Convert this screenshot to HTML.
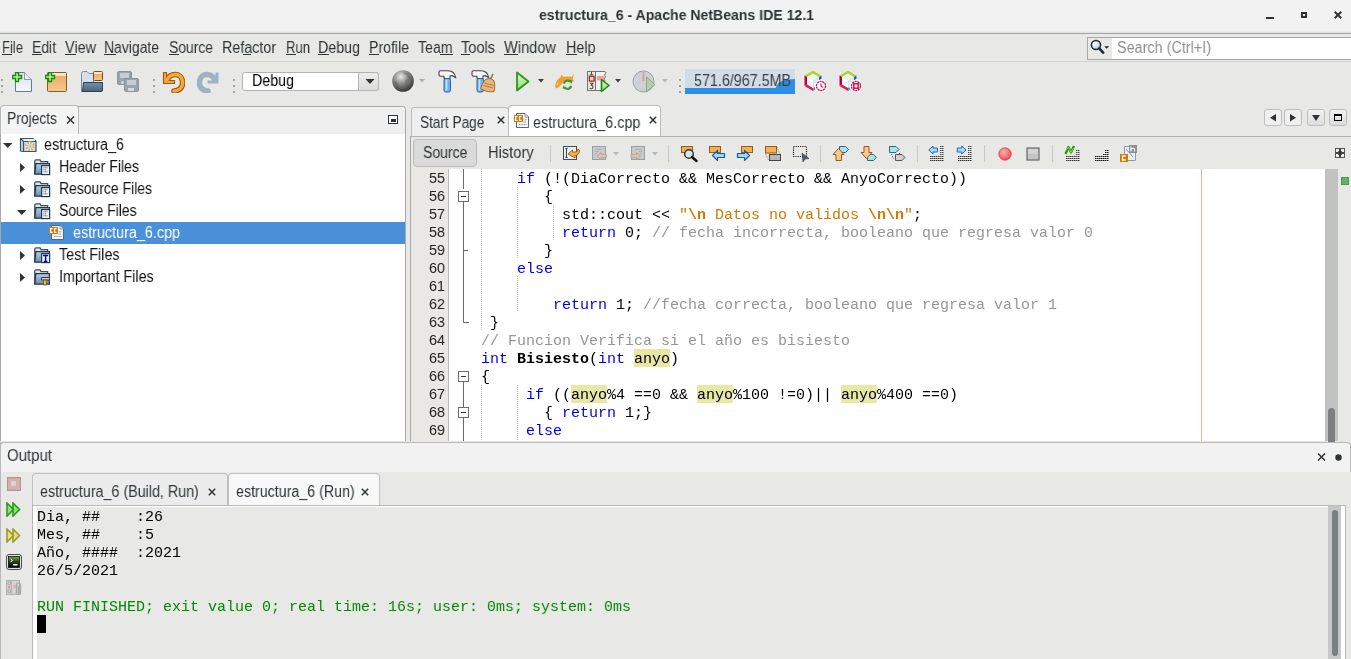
<!DOCTYPE html>
<html><head><meta charset="utf-8">
<style>
*{margin:0;padding:0;box-sizing:border-box}
html,body{width:1351px;height:659px;overflow:hidden;background:#e8e8e7;font-family:"Liberation Sans",sans-serif;color:#2e3436;position:relative}
.a{position:absolute}
.t{position:absolute;white-space:pre;will-change:transform}
</style></head><body>
<div class="a" style="left:0px;top:0px;width:1351px;height:33px;background:#f2f2f2;"></div>
<div class="a" style="left:0px;top:31px;width:1351px;height:2px;background:linear-gradient(#f2f2f2,#dcdcdc);"></div>
<div class="a" style="left:0px;top:33px;width:1351px;height:1px;background:#a6a6a6;"></div>
<div class="t" style="left:538.5px;top:5.80px;font-size:15px;line-height:18px;color:#2e3436;font-weight:bold;font-family:'Liberation Sans',sans-serif;transform:scaleX(0.9389);transform-origin:0 0;">estructura_6 - Apache NetBeans IDE 12.1</div>
<div class="a" style="left:1266px;top:17px;width:8px;height:2px;background:#2e3436;"></div>
<div class="a" style="left:1301px;top:12px;width:6px;height:6px;border:2px solid #2e3436"></div>
<svg class="a" style="left:1334px;top:11px;" width="8" height="8" viewBox="0 0 8 8"><path d="M0.7 0.7 L7.3 7.3 M7.3 0.7 L0.7 7.3" stroke="#2e3436" stroke-width="2"/></svg>
<div class="a" style="left:0px;top:61px;width:1351px;height:1px;background:#d3d3d2;"></div>
<div class="t" style="left:2px;top:37.95px;font-size:16px;line-height:19px;color:#2e3436;font-weight:normal;font-family:'Liberation Sans',sans-serif;transform:scaleX(0.8145);transform-origin:0 0;">File</div>
<div class="t" style="left:32px;top:37.95px;font-size:16px;line-height:19px;color:#2e3436;font-weight:normal;font-family:'Liberation Sans',sans-serif;transform:scaleX(0.8703);transform-origin:0 0;">Edit</div>
<div class="t" style="left:65px;top:37.95px;font-size:16px;line-height:19px;color:#2e3436;font-weight:normal;font-family:'Liberation Sans',sans-serif;transform:scaleX(0.9014);transform-origin:0 0;">View</div>
<div class="t" style="left:104px;top:37.95px;font-size:16px;line-height:19px;color:#2e3436;font-weight:normal;font-family:'Liberation Sans',sans-serif;transform:scaleX(0.8709);transform-origin:0 0;">Navigate</div>
<div class="t" style="left:169px;top:37.95px;font-size:16px;line-height:19px;color:#2e3436;font-weight:normal;font-family:'Liberation Sans',sans-serif;transform:scaleX(0.8678);transform-origin:0 0;">Source</div>
<div class="t" style="left:222px;top:37.95px;font-size:16px;line-height:19px;color:#2e3436;font-weight:normal;font-family:'Liberation Sans',sans-serif;transform:scaleX(0.8930);transform-origin:0 0;">Refactor</div>
<div class="t" style="left:286px;top:37.95px;font-size:16px;line-height:19px;color:#2e3436;font-weight:normal;font-family:'Liberation Sans',sans-serif;transform:scaleX(0.8175);transform-origin:0 0;">Run</div>
<div class="t" style="left:318px;top:37.95px;font-size:16px;line-height:19px;color:#2e3436;font-weight:normal;font-family:'Liberation Sans',sans-serif;transform:scaleX(0.8907);transform-origin:0 0;">Debug</div>
<div class="t" style="left:369px;top:37.95px;font-size:16px;line-height:19px;color:#2e3436;font-weight:normal;font-family:'Liberation Sans',sans-serif;transform:scaleX(0.8818);transform-origin:0 0;">Profile</div>
<div class="t" style="left:418px;top:37.95px;font-size:16px;line-height:19px;color:#2e3436;font-weight:normal;font-family:'Liberation Sans',sans-serif;transform:scaleX(0.8843);transform-origin:0 0;">Team</div>
<div class="t" style="left:461px;top:37.95px;font-size:16px;line-height:19px;color:#2e3436;font-weight:normal;font-family:'Liberation Sans',sans-serif;transform:scaleX(0.9101);transform-origin:0 0;">Tools</div>
<div class="t" style="left:504px;top:37.95px;font-size:16px;line-height:19px;color:#2e3436;font-weight:normal;font-family:'Liberation Sans',sans-serif;transform:scaleX(0.9138);transform-origin:0 0;">Window</div>
<div class="t" style="left:565.5px;top:37.95px;font-size:16px;line-height:19px;color:#2e3436;font-weight:normal;font-family:'Liberation Sans',sans-serif;transform:scaleX(0.8965);transform-origin:0 0;">Help</div>
<div class="a" style="left:2px;top:54px;width:10px;height:1px;background:#2e3436;"></div>
<div class="a" style="left:32px;top:54px;width:10px;height:1px;background:#2e3436;"></div>
<div class="a" style="left:65px;top:54px;width:11px;height:1px;background:#2e3436;"></div>
<div class="a" style="left:104px;top:54px;width:12px;height:1px;background:#2e3436;"></div>
<div class="a" style="left:169px;top:54px;width:10px;height:1px;background:#2e3436;"></div>
<div class="a" style="left:243px;top:54px;width:8px;height:1px;background:#2e3436;"></div>
<div class="a" style="left:286px;top:54px;width:10px;height:1px;background:#2e3436;"></div>
<div class="a" style="left:318px;top:54px;width:11px;height:1px;background:#2e3436;"></div>
<div class="a" style="left:369px;top:54px;width:10px;height:1px;background:#2e3436;"></div>
<div class="a" style="left:440px;top:54px;width:13px;height:1px;background:#2e3436;"></div>
<div class="a" style="left:461px;top:54px;width:9px;height:1px;background:#2e3436;"></div>
<div class="a" style="left:504px;top:54px;width:14px;height:1px;background:#2e3436;"></div>
<div class="a" style="left:565.5px;top:54px;width:11px;height:1px;background:#2e3436;"></div>
<div class="a" style="left:1087px;top:37px;width:264px;height:23px;background:#ffffff;border:1px solid #a9a9a9;border-right:none"></div>
<div class="a" style="left:1088px;top:38px;width:24px;height:21px;background:#e8e8e7;"></div>
<svg class="a" style="left:1089px;top:38px;" width="23" height="21" viewBox="0 0 23 21"><defs><radialGradient id="lens" cx="0.35" cy="0.35" r="0.7"><stop offset="0" stop-color="#ffffff"/><stop offset="1" stop-color="#a8c8e8"/></radialGradient></defs><circle cx="7" cy="7" r="4.6" fill="url(#lens)" stroke="#1e2830" stroke-width="1.5"/><path d="M10.2 10.4 L14.2 14.6" stroke="#1e2830" stroke-width="2.6" stroke-linecap="round"/><path d="M15.2 8.2 H20.2 L17.7 10.8 Z" fill="#1e2830"/></svg>
<div class="t" style="left:1116.7px;top:38.45px;font-size:16px;line-height:19px;color:#8b8e8f;font-weight:normal;font-family:'Liberation Sans',sans-serif;transform:scaleX(0.8998);transform-origin:0 0;">Search (Ctrl+I)</div>
<div class="a" style="left:1px;top:79px;width:2px;height:2px;background:#a0a0a0;"></div>
<div class="a" style="left:1px;top:85px;width:2px;height:2px;background:#a0a0a0;"></div>
<div class="a" style="left:1px;top:91px;width:2px;height:2px;background:#a0a0a0;"></div>
<div class="a" style="left:153px;top:79px;width:2px;height:2px;background:#a0a0a0;"></div>
<div class="a" style="left:153px;top:85px;width:2px;height:2px;background:#a0a0a0;"></div>
<div class="a" style="left:153px;top:91px;width:2px;height:2px;background:#a0a0a0;"></div>
<div class="a" style="left:233px;top:79px;width:2px;height:2px;background:#a0a0a0;"></div>
<div class="a" style="left:233px;top:85px;width:2px;height:2px;background:#a0a0a0;"></div>
<div class="a" style="left:233px;top:91px;width:2px;height:2px;background:#a0a0a0;"></div>
<div class="a" style="left:679px;top:79px;width:2px;height:2px;background:#a0a0a0;"></div>
<div class="a" style="left:679px;top:85px;width:2px;height:2px;background:#a0a0a0;"></div>
<div class="a" style="left:679px;top:91px;width:2px;height:2px;background:#a0a0a0;"></div>
<svg class="a" style="left:12px;top:72px;" width="21" height="21" viewBox="0 0 21 21"><defs><linearGradient id="gdoc" x1="0" y1="0" x2="0" y2="1"><stop offset="0" stop-color="#d8e2ee"/><stop offset="1" stop-color="#f4f7fb"/></linearGradient><linearGradient id="gorg" x1="0" y1="0" x2="0" y2="1"><stop offset="0" stop-color="#e9a85a"/><stop offset="1" stop-color="#f4c990"/></linearGradient><linearGradient id="gblu" x1="0" y1="0" x2="0" y2="1"><stop offset="0" stop-color="#7890a8"/><stop offset="1" stop-color="#4a6480"/></linearGradient><linearGradient id="ggrn" x1="0" y1="0" x2="0" y2="1"><stop offset="0" stop-color="#e0f8c8"/><stop offset="1" stop-color="#90d870"/></linearGradient></defs><path d="M3.5 0.5 H12.5 L19.5 7.5 V19.5 H3.5 Z" fill="url(#gdoc)" stroke="#6c7a88"/><path d="M12.5 0.5 V7.5 H19.5" fill="#e8eef4" stroke="#8a98a6"/><path d="M3.5 0.5 H6.5 V3.5 H9.5 V6.5 H6.5 V9.5 H3.5 V6.5 H0.5 V3.5 H3.5 Z" fill="#b8f088" stroke="#178a17" stroke-width="1.4"/></svg>
<svg class="a" style="left:45px;top:72px;" width="23" height="21" viewBox="0 0 23 21"><defs><linearGradient id="gdoc" x1="0" y1="0" x2="0" y2="1"><stop offset="0" stop-color="#d8e2ee"/><stop offset="1" stop-color="#f4f7fb"/></linearGradient><linearGradient id="gorg" x1="0" y1="0" x2="0" y2="1"><stop offset="0" stop-color="#e9a85a"/><stop offset="1" stop-color="#f4c990"/></linearGradient><linearGradient id="gblu" x1="0" y1="0" x2="0" y2="1"><stop offset="0" stop-color="#7890a8"/><stop offset="1" stop-color="#4a6480"/></linearGradient><linearGradient id="ggrn" x1="0" y1="0" x2="0" y2="1"><stop offset="0" stop-color="#e0f8c8"/><stop offset="1" stop-color="#90d870"/></linearGradient></defs><rect x="2.5" y="0.5" width="19" height="19" rx="1" fill="url(#gorg)" stroke="#8a5a20"/><rect x="3" y="1" width="18" height="3" fill="#fbe6c8"/><path d="M3.5 0.5 H6.5 V3.5 H9.5 V6.5 H6.5 V9.5 H3.5 V6.5 H0.5 V3.5 H3.5 Z" fill="#b8f088" stroke="#178a17" stroke-width="1.4"/></svg>
<svg class="a" style="left:80px;top:70px;" width="24" height="23" viewBox="0 0 24 23"><defs><linearGradient id="gdoc" x1="0" y1="0" x2="0" y2="1"><stop offset="0" stop-color="#d8e2ee"/><stop offset="1" stop-color="#f4f7fb"/></linearGradient><linearGradient id="gorg" x1="0" y1="0" x2="0" y2="1"><stop offset="0" stop-color="#e9a85a"/><stop offset="1" stop-color="#f4c990"/></linearGradient><linearGradient id="gblu" x1="0" y1="0" x2="0" y2="1"><stop offset="0" stop-color="#7890a8"/><stop offset="1" stop-color="#4a6480"/></linearGradient><linearGradient id="ggrn" x1="0" y1="0" x2="0" y2="1"><stop offset="0" stop-color="#e0f8c8"/><stop offset="1" stop-color="#90d870"/></linearGradient></defs><path d="M1.5 3.5 Q1.5 1.5 3.5 1.5 H7 L9 3.5 H13.5 V21.5 H1.5 Z" fill="#d6e0ea" stroke="#7a8a9a"/><rect x="13.5" y="1.5" width="9" height="9" rx="1" fill="url(#gorg)" stroke="#7a4a10"/><rect x="14" y="2" width="8" height="2" fill="#fbe6c8"/><path d="M3.5 12.5 H22.5 V20 Q22.5 21.5 21 21.5 H2.5 Z" fill="url(#gblu)" stroke="#2a3e54"/></svg>
<svg class="a" style="left:117px;top:71px;" width="23" height="22" viewBox="0 0 23 22"><rect x="0.5" y="0.5" width="14" height="13" rx="1.5" fill="#9aa4ac" stroke="#8a949c"/><rect x="3" y="2" width="9" height="5" fill="#c8ccd0"/><rect x="4" y="10" width="6" height="3" fill="#c8ccd0"/><rect x="7.5" y="7.5" width="14" height="13" rx="1.5" fill="#9aa4ac" stroke="#8a949c"/><rect x="10" y="9" width="9" height="5" fill="#c8ccd0"/><rect x="11" y="17" width="6" height="3" fill="#d8dadc"/></svg>
<svg class="a" style="left:162px;top:71px;" width="23" height="22" viewBox="0 0 23 22"><path d="M5 9 C8 2 19 1 20.5 10 C21.5 17 16 20 12 20" fill="none" stroke="#9a5a10" stroke-width="5.6" stroke-linecap="round"/><path d="M1.5 1.5 H4.5 V9.5 H12.5 V12.5 H1.5 Z" fill="#f0a838" stroke="#9a5a10" stroke-width="1.2" stroke-linejoin="round"/><path d="M5 9 C8 2 19 1 20.5 10 C21.5 17 16 20 12 20" fill="none" stroke="#f5a838" stroke-width="3.4" stroke-linecap="round"/><path d="M2.2 2.2 H3.8 V10.5 H12 V11.8 H2.2 Z" fill="#f5a838"/></svg>
<svg class="a" style="left:197px;top:71px;" width="23" height="22" viewBox="0 0 23 22"><path d="M18 9 C15 2 4 1 2.5 10 C1.5 17 7 20 11 20" fill="none" stroke="#9eb2c4" stroke-width="5.6" stroke-linecap="round"/><path d="M21.5 1.5 H18.5 V9.5 H10.5 V12.5 H21.5 Z" fill="#9eb2c4"/></svg>
<div class="a" style="left:242px;top:72px;width:137px;height:19px;background:#fff;border:1px solid #b3b3b3;border-radius:3px"></div>
<div class="a" style="left:358px;top:72px;width:21px;height:19px;background:linear-gradient(#ededed,#dcdcdc);border:1px solid #b3b3b3;border-radius:0 3px 3px 0"></div>
<svg class="a" style="left:365px;top:79px;" width="10" height="6" viewBox="0 0 10 6"><path d="M0.5 0 H9.5 L5 5 Z" fill="#2e3436"/></svg>
<div class="t" style="left:252px;top:70.95px;font-size:16px;line-height:19px;color:#000000;font-weight:normal;font-family:'Liberation Sans',sans-serif;transform:scaleX(0.8907);transform-origin:0 0;">Debug</div>
<svg class="a" style="left:392px;top:70px;" width="23" height="22" viewBox="0 0 23 22"><defs><radialGradient id="gl" cx="0.4" cy="0.3" r="0.75"><stop offset="0" stop-color="#e8e8e8"/><stop offset="0.45" stop-color="#8a8a8a"/><stop offset="1" stop-color="#2a2a2a"/></radialGradient></defs><circle cx="11" cy="11" r="10.8" fill="url(#gl)"/><path d="M12 3 C16 4 18 7 17 10 C15 9 13 12 15 15 C13 18 11 17 10 19" fill="none" stroke="#666" stroke-width="1.8" opacity="0.5"/><path d="M3 12 C5 13 6 16 5 18" fill="none" stroke="#555" stroke-width="1.6" opacity="0.5"/></svg>
<svg class="a" style="left:418.5px;top:79px;" width="6" height="4" viewBox="0 0 6 4"><path d="M0 0 H6 L3 3.6 Z" fill="#b0b0b0"/></svg>
<svg class="a" style="left:438px;top:70px;" width="19" height="23" viewBox="0 0 19 23"><path d="M1 2.2 Q1 0.8 2.5 0.8 H10 C14 0.8 17 3.5 17.8 7.8 C15.5 5.8 13.5 5.2 12 6 V8.5 H6 V6.2 H2.5 Q1 6.2 1 4.8 Z" fill="#f2f4f6" stroke="#3e4850" stroke-width="1.1" stroke-linejoin="round"/><rect x="6" y="8.5" width="6.5" height="13.5" rx="1.8" fill="#6eb0ec" stroke="#2a64a4"/><rect x="7.6" y="9.5" width="1.8" height="11" fill="#c0e0fa"/></svg>
<svg class="a" style="left:471px;top:70px;" width="25" height="23" viewBox="0 0 25 23"><path d="M1 2.2 Q1 0.8 2.5 0.8 H10 C14 0.8 17 3.5 17.8 7.8 C15.5 5.8 13.5 5.2 12 6 V8.5 H6 V6.2 H2.5 Q1 6.2 1 4.8 Z" fill="#f2f4f6" stroke="#3e4850" stroke-width="1.1" stroke-linejoin="round"/><rect x="6" y="8.5" width="6.5" height="13.5" rx="1.8" fill="#6eb0ec" stroke="#2a64a4"/><rect x="7.6" y="9.5" width="1.8" height="11" fill="#c0e0fa"/><path d="M22 4 L19.5 9" stroke="#8a6a3a" stroke-width="1.6"/><path d="M14 10 C17 8 21 8 23 11 C24 14 24 18 23 21.5 C19 22.5 13 21 9.5 18.5 C11 15 12 12 14 10 Z" fill="#e6b878" stroke="#9a6a2a" stroke-width="1"/><path d="M13.5 13 L22.5 15.5 M12.5 15.5 L22 18" stroke="#c86a4a" stroke-width="0.9"/></svg>
<svg class="a" style="left:515px;top:71px;" width="15" height="21" viewBox="0 0 15 21"><defs><linearGradient id="gdoc" x1="0" y1="0" x2="0" y2="1"><stop offset="0" stop-color="#d8e2ee"/><stop offset="1" stop-color="#f4f7fb"/></linearGradient><linearGradient id="gorg" x1="0" y1="0" x2="0" y2="1"><stop offset="0" stop-color="#e9a85a"/><stop offset="1" stop-color="#f4c990"/></linearGradient><linearGradient id="gblu" x1="0" y1="0" x2="0" y2="1"><stop offset="0" stop-color="#7890a8"/><stop offset="1" stop-color="#4a6480"/></linearGradient><linearGradient id="ggrn" x1="0" y1="0" x2="0" y2="1"><stop offset="0" stop-color="#e0f8c8"/><stop offset="1" stop-color="#90d870"/></linearGradient></defs><path d="M2 1.5 L13.5 10.5 L2 19.5 Z" fill="url(#ggrn)" stroke="#2a9a1a" stroke-width="1.8" stroke-linejoin="round"/></svg>
<svg class="a" style="left:537.5px;top:79px;" width="6" height="4" viewBox="0 0 6 4"><path d="M0 0 H6 L3 3.6 Z" fill="#404040"/></svg>
<svg class="a" style="left:553px;top:72px;" width="22" height="19" viewBox="0 0 22 19"><path d="M2.5 15.5 C1.5 12 3.5 7.5 7.5 5.5 L8.5 2.5 L10.5 5 C13.5 4.3 16.5 4.5 18.5 5 L21 2 L19.8 6.5 L21 9.5 C18 8.8 15 8.8 12 9.5 C9 11 7.5 14.5 3.5 16.5 Z" fill="#f0a030"/><circle cx="4.5" cy="12" r="0.8" fill="#fff" opacity="0.7"/><path d="M11 11.5 A3.8 3.8 0 0 1 17.8 10.2" fill="none" stroke="#3a9a3a" stroke-width="2.2"/><path d="M18.2 13.8 A3.8 3.8 0 0 1 11.2 15" fill="none" stroke="#3a9a3a" stroke-width="2.2"/><path d="M16 8 L19.5 8.5 L18.5 12 Z M13 17.2 L9.5 16.5 L10.7 13.2 Z" fill="#3a9a3a"/><circle cx="14.5" cy="12.5" r="2" fill="#d8f0d8"/></svg>
<svg class="a" style="left:586px;top:70px;" width="25" height="23" viewBox="0 0 25 23"><defs><linearGradient id="gdoc" x1="0" y1="0" x2="0" y2="1"><stop offset="0" stop-color="#d8e2ee"/><stop offset="1" stop-color="#f4f7fb"/></linearGradient><linearGradient id="gorg" x1="0" y1="0" x2="0" y2="1"><stop offset="0" stop-color="#e9a85a"/><stop offset="1" stop-color="#f4c990"/></linearGradient><linearGradient id="gblu" x1="0" y1="0" x2="0" y2="1"><stop offset="0" stop-color="#7890a8"/><stop offset="1" stop-color="#4a6480"/></linearGradient><linearGradient id="ggrn" x1="0" y1="0" x2="0" y2="1"><stop offset="0" stop-color="#e0f8c8"/><stop offset="1" stop-color="#90d870"/></linearGradient></defs><path d="M1.5 1.5 H19 L20 3 L18.5 5 L19.5 7 L18 9 L19 11 L17.5 13 L18.5 15 L17 17 L18 19 L17 20.5 H1.5 Z" fill="#eef0f2" stroke="#6a7580"/><rect x="1.5" y="1.5" width="8" height="19" fill="#f2e8c8" stroke="#6a7580"/><path d="M5.5 2 V4.5 M3.8 4.8 H7.2" stroke="#333" stroke-width="0.9"/><rect x="3.3" y="6.3" width="4.8" height="4.8" fill="#f8c8c0" stroke="#902a2a" stroke-width="1.2"/><path d="M3.8 13.3 H6.8 L5.2 15.3 C7.6 15.3 7.6 18.8 5.2 18.8 C4.4 18.8 4 18.5 3.7 18" fill="none" stroke="#3a4650" stroke-width="1.1"/><rect x="11" y="6" width="7" height="4.5" fill="#f89a9a"/><path d="M15.5 9.5 L23 15.5 L15.5 21.5 Z" fill="url(#ggrn)" stroke="#1a8a10" stroke-width="1.6" stroke-linejoin="round"/></svg>
<svg class="a" style="left:614.5px;top:79px;" width="6" height="4" viewBox="0 0 6 4"><path d="M0 0 H6 L3 3.6 Z" fill="#404040"/></svg>
<svg class="a" style="left:632px;top:70px;" width="24" height="23" viewBox="0 0 24 23"><circle cx="11.5" cy="11.5" r="10.5" fill="#cdd1d5" stroke="#9aa0a6"/><path d="M11.5 2 V11" stroke="#d8a078" stroke-width="1.6"/><path d="M14.5 7 L23 14.5 L14.5 22 Z" fill="#b8ccb0" stroke="#8aa880" stroke-width="1"/></svg>
<svg class="a" style="left:662px;top:79px;" width="6" height="4" viewBox="0 0 6 4"><path d="M0 0 H6 L3 3.6 Z" fill="#b8b8b8"/></svg>
<div class="a" style="left:685px;top:69px;width:110px;height:25px;background:#d0dce8;"></div>
<svg class="a" style="left:685px;top:69px;" width="110" height="25" viewBox="0 0 110 25"><path d="M0 19 H91 C92 15 94 10.5 110 10 V25 H0 Z" fill="#2e8de4"/></svg>
<div class="t" style="left:693.5px;top:70.95px;font-size:16px;line-height:19px;color:#3a3c3e;font-weight:normal;font-family:'Liberation Sans',sans-serif;transform:scaleX(0.8938);transform-origin:0 0;">571.6/967.5MB</div>
<svg class="a" style="left:803px;top:69px;" width="25" height="25" viewBox="0 0 25 25"><path d="M10 1.5 L18.5 6.5 L18.5 17 L10 22 L1.5 17 L1.5 6.5 Z" fill="#fff"/><path d="M10 4.5 L16 8 L10 11.5 L4 8 Z" fill="#f2f6e4"/><path d="M16 8 V15.5 L10 19 V11.5 Z" fill="#d8e4f0"/><path d="M1.5 6.5 L10 1.5 L18.5 6.5 L16 8 L10 4.5 L4 8 Z" fill="#a8d830"/><path d="M1.5 6.5 L4 8 V15.5 L1.5 17 Z" fill="#b0003a"/><path d="M1.5 17 L4 15.5 L10 19 V22 Z" fill="#e8184a"/><path d="M18.5 6.5 V10 L16 11.5 V8 Z" fill="#1a5ad0"/><path d="M10 22 V19 L12 18 L13 20 Z" fill="#3a9af0"/><circle cx="18" cy="17" r="6.5" fill="#fff"/><circle cx="18" cy="17" r="4.6" fill="#fff" stroke="#c0104a" stroke-width="1.3" stroke-dasharray="2.2 0.6"/><path d="M18 14.5 V17 L20 18.5" stroke="#e83a6a" stroke-width="1.4" fill="none"/></svg>
<svg class="a" style="left:838px;top:69px;" width="25" height="25" viewBox="0 0 25 25"><path d="M10 1.5 L18.5 6.5 L18.5 17 L10 22 L1.5 17 L1.5 6.5 Z" fill="#fff"/><path d="M10 4.5 L16 8 L10 11.5 L4 8 Z" fill="#f2f6e4"/><path d="M16 8 V15.5 L10 19 V11.5 Z" fill="#d8e4f0"/><path d="M1.5 6.5 L10 1.5 L18.5 6.5 L16 8 L10 4.5 L4 8 Z" fill="#a8d830"/><path d="M1.5 6.5 L4 8 V15.5 L1.5 17 Z" fill="#b0003a"/><path d="M1.5 17 L4 15.5 L10 19 V22 Z" fill="#e8184a"/><path d="M18.5 6.5 V10 L16 11.5 V8 Z" fill="#1a5ad0"/><path d="M10 22 V19 L12 18 L13 20 Z" fill="#3a9af0"/><circle cx="18" cy="17" r="6.5" fill="#fff"/><circle cx="18" cy="17" r="4.6" fill="#fff" stroke="#c0104a" stroke-width="1.3" stroke-dasharray="2.2 0.6"/><rect x="15.8" y="14.8" width="4.4" height="4.4" fill="#fff" stroke="#e8184a" stroke-width="1.6"/></svg>
<div class="a" style="left:0px;top:106px;width:406px;height:335px;background:#fff;border:1px solid #a9a9a9;border-bottom:none;border-radius:4px 4px 0 0"></div>
<div class="a" style="left:1px;top:107px;width:404px;height:27px;background:#efefef;border-radius:3px 3px 0 0"></div>
<div class="a" style="left:0px;top:105px;width:79px;height:29px;background:#f4f4f4;border:1px solid #b9b9b9;border-bottom:none;border-radius:4px 4px 0 0"></div>
<div class="t" style="left:6.7px;top:108.95px;font-size:16px;line-height:19px;color:#2e3436;font-weight:normal;font-family:'Liberation Sans',sans-serif;transform:scaleX(0.8651);transform-origin:0 0;">Projects</div>
<svg class="a" style="left:66px;top:116px;" width="9" height="8" viewBox="0 0 9 8"><path d="M1 0.5 L8 7.5 M8 0.5 L1 7.5" stroke="#2e3436" stroke-width="1.5"/></svg>
<div class="a" style="left:388px;top:115px;width:10px;height:9px;border:1.5px solid #2e3436;background:#fff"></div>
<div class="a" style="left:390.5px;top:119px;width:5px;height:3px;background:#2e3436;"></div>
<div class="a" style="left:1px;top:222px;width:404px;height:22px;background:#4a90d9;"></div>
<svg class="a" style="left:3px;top:143px;" width="10" height="6" viewBox="0 0 10 6"><path d="M0 0 H9.5 L4.75 5 Z" fill="#2e3436"/></svg>
<svg class="a" style="left:19px;top:137px;" width="18" height="16" viewBox="0 0 18 16"><path d="M1.5 14 V1.5 H14 L17 4 V14.5 H4.5 Z" fill="#c4daf0" stroke="#3e5466" stroke-width="1.2"/><path d="M1.5 1.5 L4.5 4.5 H17 M4.5 4.5 V14.5" fill="none" stroke="#3e5466" stroke-width="1.2"/><rect x="5" y="2" width="11" height="2" fill="#e6f2f6"/><circle cx="11" cy="9.2" r="3.6" fill="none" stroke="#f2e6b0" stroke-width="2.2"/><circle cx="11" cy="9.2" r="3.6" fill="none" stroke="#e8a030" stroke-width="2.2" stroke-dasharray="1.4 1.4" opacity="0.9"/><circle cx="11" cy="9.2" r="1.3" fill="#a8d0f0"/></svg>
<div class="t" style="left:44.4px;top:134.95px;font-size:16px;line-height:19px;color:#111111;font-weight:normal;font-family:'Liberation Sans',sans-serif;transform:scaleX(0.8995);transform-origin:0 0;">estructura_6</div>
<svg class="a" style="left:20px;top:162.5px;" width="6" height="10" viewBox="0 0 6 10"><path d="M0 0 V9 L5 4.5 Z" fill="#2e3436"/></svg>
<svg class="a" style="left:34px;top:159px;" width="17" height="17" viewBox="0 0 17 17"><defs><linearGradient id="gf159" x1="0" y1="0" x2="0" y2="1"><stop offset="0" stop-color="#b8d0e6"/><stop offset="1" stop-color="#6a8cae"/></linearGradient></defs><path d="M0.8 15.2 V2.2 Q0.8 0.8 2.2 0.8 H6 L7 2.6 H13.6 V5" fill="#dde6ee" stroke="#3e4e5e" stroke-width="1.3"/><path d="M0.8 15.2 L1.8 4.6 H15.4 V15.2 Z" fill="url(#gf159)" stroke="#26384c" stroke-width="1.3"/><rect x="7.6" y="6.6" width="8" height="9" fill="#eef4fa" stroke="#26384c" stroke-width="1.2"/><path d="M9.5 8.8 H14 M9.5 10.8 H12 M9.5 12.8 H14" stroke="#4a5a6a" stroke-width="0.9" stroke-dasharray="1 0.5"/></svg>
<div class="t" style="left:58.5px;top:156.95px;font-size:16px;line-height:19px;color:#111111;font-weight:normal;font-family:'Liberation Sans',sans-serif;transform:scaleX(0.8820);transform-origin:0 0;">Header Files</div>
<svg class="a" style="left:20px;top:184.5px;" width="6" height="10" viewBox="0 0 6 10"><path d="M0 0 V9 L5 4.5 Z" fill="#2e3436"/></svg>
<svg class="a" style="left:34px;top:181px;" width="17" height="17" viewBox="0 0 17 17"><defs><linearGradient id="gf181" x1="0" y1="0" x2="0" y2="1"><stop offset="0" stop-color="#b8d0e6"/><stop offset="1" stop-color="#6a8cae"/></linearGradient></defs><path d="M0.8 15.2 V2.2 Q0.8 0.8 2.2 0.8 H6 L7 2.6 H13.6 V5" fill="#dde6ee" stroke="#3e4e5e" stroke-width="1.3"/><path d="M0.8 15.2 L1.8 4.6 H15.4 V15.2 Z" fill="url(#gf181)" stroke="#26384c" stroke-width="1.3"/><rect x="7.6" y="6.6" width="8" height="9" fill="#eef4fa" stroke="#26384c" stroke-width="1.2"/><path d="M9.5 8.8 H14 M9.5 10.8 H12 M9.5 12.8 H14" stroke="#4a5a6a" stroke-width="0.9" stroke-dasharray="1 0.5"/></svg>
<div class="t" style="left:58.5px;top:178.95px;font-size:16px;line-height:19px;color:#111111;font-weight:normal;font-family:'Liberation Sans',sans-serif;transform:scaleX(0.8716);transform-origin:0 0;">Resource Files</div>
<svg class="a" style="left:17px;top:210px;" width="10" height="6" viewBox="0 0 10 6"><path d="M0 0 H9.5 L4.75 5 Z" fill="#2e3436"/></svg>
<svg class="a" style="left:34px;top:203px;" width="17" height="17" viewBox="0 0 17 17"><defs><linearGradient id="gf203" x1="0" y1="0" x2="0" y2="1"><stop offset="0" stop-color="#b8d0e6"/><stop offset="1" stop-color="#6a8cae"/></linearGradient></defs><path d="M0.8 15.2 V2.2 Q0.8 0.8 2.2 0.8 H6 L7 2.6 H13.6 V5" fill="#dde6ee" stroke="#3e4e5e" stroke-width="1.3"/><path d="M0.8 15.2 L1.8 4.6 H15.4 V15.2 Z" fill="url(#gf203)" stroke="#26384c" stroke-width="1.3"/><rect x="7.6" y="6.6" width="8" height="9" fill="#eef4fa" stroke="#26384c" stroke-width="1.2"/><path d="M9.5 8.8 H14 M9.5 10.8 H12 M9.5 12.8 H14" stroke="#4a5a6a" stroke-width="0.9" stroke-dasharray="1 0.5"/></svg>
<div class="t" style="left:58.5px;top:200.95px;font-size:16px;line-height:19px;color:#111111;font-weight:normal;font-family:'Liberation Sans',sans-serif;transform:scaleX(0.8716);transform-origin:0 0;">Source Files</div>
<svg class="a" style="left:49px;top:225px;" width="16" height="16" viewBox="0 0 16 16"><path d="M2.5 0.5 H11 L14.5 4 V14.5 H2.5 Z" fill="#f2f6fa" stroke="#5a6470"/><path d="M11 0.5 V4 H14.5" fill="#dde4ea" stroke="#7a8490" stroke-width="0.8"/><path d="M9.5 6.8 H13 M9.5 9 H12 M5 11.5 H13" stroke="#6a7480" stroke-width="0.8" stroke-dasharray="1 0.6"/><rect x="0" y="2" width="9" height="7" fill="#d87a00"/><path d="M3.6 3.6 H1.6 V7.4 H3.6 M7.6 3.6 H5.6 V7.4 H7.6" fill="none" stroke="#fff" stroke-width="1.1"/></svg>
<div class="t" style="left:72.5px;top:222.95px;font-size:16px;line-height:19px;color:#ffffff;font-weight:normal;font-family:'Liberation Sans',sans-serif;transform:scaleX(0.8977);transform-origin:0 0;">estructura_6.cpp</div>
<svg class="a" style="left:20px;top:250.5px;" width="6" height="10" viewBox="0 0 6 10"><path d="M0 0 V9 L5 4.5 Z" fill="#2e3436"/></svg>
<svg class="a" style="left:34px;top:247px;" width="17" height="17" viewBox="0 0 17 17"><defs><linearGradient id="gf247" x1="0" y1="0" x2="0" y2="1"><stop offset="0" stop-color="#b8d0e6"/><stop offset="1" stop-color="#6a8cae"/></linearGradient></defs><path d="M0.8 15.2 V2.2 Q0.8 0.8 2.2 0.8 H6 L7 2.6 H13.6 V5" fill="#dde6ee" stroke="#3e4e5e" stroke-width="1.3"/><path d="M0.8 15.2 L1.8 4.6 H15.4 V15.2 Z" fill="url(#gf247)" stroke="#26384c" stroke-width="1.3"/><rect x="7.6" y="6.6" width="8" height="9" fill="#eef4fa" stroke="#26384c" stroke-width="1.2"/><path d="M9 8.6 H14.2 M11.6 8.6 V14.4 M9.8 14.4 H13.4" stroke="#0a0a8a" stroke-width="1.5"/></svg>
<div class="t" style="left:58.5px;top:244.95px;font-size:16px;line-height:19px;color:#111111;font-weight:normal;font-family:'Liberation Sans',sans-serif;transform:scaleX(0.8967);transform-origin:0 0;">Test Files</div>
<svg class="a" style="left:20px;top:272.5px;" width="6" height="10" viewBox="0 0 6 10"><path d="M0 0 V9 L5 4.5 Z" fill="#2e3436"/></svg>
<svg class="a" style="left:34px;top:269px;" width="17" height="17" viewBox="0 0 17 17"><defs><linearGradient id="gf269" x1="0" y1="0" x2="0" y2="1"><stop offset="0" stop-color="#b8d0e6"/><stop offset="1" stop-color="#6a8cae"/></linearGradient></defs><path d="M0.8 15.2 V2.2 Q0.8 0.8 2.2 0.8 H6 L7 2.6 H13.6 V5" fill="#dde6ee" stroke="#3e4e5e" stroke-width="1.3"/><path d="M0.8 15.2 L1.8 4.6 H15.4 V15.2 Z" fill="url(#gf269)" stroke="#26384c" stroke-width="1.3"/><path d="M7.5 8.5 H14.8 L15.5 9.5 V11 H7.5 Z" fill="#d8d4cc" stroke="#3a3a3a" stroke-width="1"/><rect x="9.6" y="11" width="3" height="5" fill="#e8c040" stroke="#6a5010" stroke-width="0.8"/></svg>
<div class="t" style="left:58.5px;top:266.95px;font-size:16px;line-height:19px;color:#111111;font-weight:normal;font-family:'Liberation Sans',sans-serif;transform:scaleX(0.8950);transform-origin:0 0;">Important Files</div>
<div class="a" style="left:411px;top:107px;width:98px;height:30px;background:#efefef;border:1px solid #bcbcbc;border-bottom:none;border-radius:4px 4px 0 0"></div>
<div class="a" style="left:508px;top:105px;width:153px;height:32px;background:#ffffff;border:1px solid #bcbcbc;border-bottom:none;border-radius:4px 4px 0 0"></div>
<div class="t" style="left:419.7px;top:112.95px;font-size:16px;line-height:19px;color:#2e3436;font-weight:normal;font-family:'Liberation Sans',sans-serif;transform:scaleX(0.8504);transform-origin:0 0;">Start Page</div>
<svg class="a" style="left:497px;top:116px;" width="8" height="8" viewBox="0 0 8 8"><path d="M0.8 0.8 L7.2 7.2 M7.2 0.8 L0.8 7.2" stroke="#2e3436" stroke-width="1.5"/></svg>
<svg class="a" style="left:514px;top:113px;" width="16" height="16" viewBox="0 0 16 16"><path d="M2.5 0.5 H11 L14.5 4 V14.5 H2.5 Z" fill="#f2f6fa" stroke="#5a6470"/><path d="M11 0.5 V4 H14.5" fill="#dde4ea" stroke="#7a8490" stroke-width="0.8"/><path d="M9.5 6.8 H13 M9.5 9 H12 M5 11.5 H13" stroke="#6a7480" stroke-width="0.8" stroke-dasharray="1 0.6"/><rect x="0" y="2" width="9" height="7" fill="#d87a00"/><path d="M3.6 3.6 H1.6 V7.4 H3.6 M7.6 3.6 H5.6 V7.4 H7.6" fill="none" stroke="#fff" stroke-width="1.1"/></svg>
<div class="t" style="left:533px;top:112.95px;font-size:16px;line-height:19px;color:#2e3436;font-weight:normal;font-family:'Liberation Sans',sans-serif;transform:scaleX(0.9011);transform-origin:0 0;">estructura_6.cpp</div>
<svg class="a" style="left:649px;top:116px;" width="8" height="8" viewBox="0 0 8 8"><path d="M0.8 0.8 L7.2 7.2 M7.2 0.8 L0.8 7.2" stroke="#2e3436" stroke-width="1.5"/></svg>
<div class="a" style="left:1264px;top:109px;width:18px;height:17px;background:#f0f0f0;border:1px solid #bdbdbd;border-radius:3px"></div>
<div class="a" style="left:1284px;top:109px;width:18px;height:17px;background:#f0f0f0;border:1px solid #bdbdbd;border-radius:3px"></div>
<div class="a" style="left:1307px;top:109px;width:18px;height:17px;background:linear-gradient(#f2f2f2,#dcdcdc);border:1px solid #bdbdbd;border-radius:3px"></div>
<div class="a" style="left:1329px;top:109px;width:18px;height:17px;background:linear-gradient(#f2f2f2,#dcdcdc);border:1px solid #bdbdbd;border-radius:3px"></div>
<svg class="a" style="left:1270px;top:113.5px;" width="6" height="8" viewBox="0 0 6 8"><path d="M6 0 V7.5 L0 3.75 Z" fill="#2e3436"/></svg>
<svg class="a" style="left:1290px;top:113.5px;" width="6" height="8" viewBox="0 0 6 8"><path d="M0 0 V7.5 L6 3.75 Z" fill="#2e3436"/></svg>
<svg class="a" style="left:1312px;top:115px;" width="8" height="6" viewBox="0 0 8 6"><path d="M0 0 H8 L4 6 Z" fill="#2e3436"/></svg>
<div class="a" style="left:1334px;top:114px;width:8px;height:7px;border:1.3px solid #000;border-top-width:2px"></div>
<div class="a" style="left:410px;top:136px;width:941px;height:1px;background:#b3b3b3;"></div>
<div class="a" style="left:410px;top:136px;width:1px;height:305px;background:#a9a9a9;"></div>
<div class="a" style="left:413px;top:139px;width:64px;height:28px;background:#dadada;border:1px solid #bdbdbd;border-radius:4px"></div>
<div class="t" style="left:423px;top:142.95px;font-size:16px;line-height:19px;color:#2e3436;font-weight:normal;font-family:'Liberation Sans',sans-serif;transform:scaleX(0.8757);transform-origin:0 0;">Source</div>
<div class="t" style="left:488px;top:142.95px;font-size:16px;line-height:19px;color:#2e3436;font-weight:normal;font-family:'Liberation Sans',sans-serif;transform:scaleX(0.9180);transform-origin:0 0;">History</div>
<div class="a" style="left:550px;top:145px;width:1px;height:17px;background:#c8c8c8;"></div>
<div class="a" style="left:668px;top:145px;width:1px;height:17px;background:#c8c8c8;"></div>
<div class="a" style="left:820px;top:145px;width:1px;height:17px;background:#c8c8c8;"></div>
<div class="a" style="left:917px;top:145px;width:1px;height:17px;background:#c8c8c8;"></div>
<div class="a" style="left:984px;top:145px;width:1px;height:17px;background:#c8c8c8;"></div>
<div class="a" style="left:1052px;top:145px;width:1px;height:17px;background:#c8c8c8;"></div>
<svg class="a" style="left:563px;top:146px;" width="17" height="16" viewBox="0 0 17 16"><rect x="0.5" y="0.5" width="13" height="13" fill="#e4eef8" stroke="#3e4e5e"/><path d="M3.5 2.5 V11.5 M2.3 2.5 H4.7 M2.3 11.5 H4.7" stroke="#333" stroke-width="0.9"/><path d="M5 8 L9.5 4 V6 H12 C14 6 15 4.5 15 3 L16.5 4 C16.5 7.5 15 9.5 12 9.5 V12 Z" fill="#f5b040" stroke="#a05a00" stroke-width="0.9" stroke-linejoin="round"/></svg>
<svg class="a" style="left:592px;top:146px;" width="17" height="16" viewBox="0 0 17 16"><rect x="0.5" y="0.5" width="13" height="13" fill="#c8cacc" stroke="#9a9ea2"/><path d="M3 3.5 H10 M3 5.5 H7 M3 7.5 H5" stroke="#a8acb0" stroke-width="0.9"/><path d="M5 10 L9 6.5 V8.5 H14.5 V11.5 H9 V13.5 Z" fill="#d8c8b0" stroke="#b0a080" stroke-width="0.8"/></svg>
<svg class="a" style="left:612.5px;top:152px;" width="6" height="4" viewBox="0 0 6 4"><path d="M0 0 H6 L3 3.6 Z" fill="#b8b8b8"/></svg>
<svg class="a" style="left:630px;top:146px;" width="17" height="16" viewBox="0 0 17 16"><rect x="1.5" y="0.5" width="13" height="13" fill="#c8cacc" stroke="#9a9ea2"/><path d="M5 3.5 H12 M9 5.5 H12 M10 7.5 H12" stroke="#a8acb0" stroke-width="0.9"/><path d="M10.5 10 L6.5 6.5 V8.5 H1 V11.5 H6.5 V13.5 Z" fill="#d8c8b0" stroke="#b0a080" stroke-width="0.8"/></svg>
<svg class="a" style="left:651.5px;top:152px;" width="6" height="4" viewBox="0 0 6 4"><path d="M0 0 H6 L3 3.6 Z" fill="#b8b8b8"/></svg>
<svg class="a" style="left:680px;top:145px;" width="19" height="18" viewBox="0 0 19 18"><rect x="1.5" y="1.5" width="11" height="6" fill="#f5b050" stroke="#9a5a10"/><circle cx="9" cy="9" r="4.3" fill="#d8e8f4" stroke="#333" stroke-width="1.5"/><path d="M12 12 L16.5 16" stroke="#111" stroke-width="2.4" stroke-linecap="round"/></svg>
<svg class="a" style="left:708px;top:145px;" width="19" height="18" viewBox="0 0 19 18"><rect x="1.5" y="1.5" width="11" height="6" fill="#f5b050" stroke="#9a5a10"/><path d="M4.5 10.5 L9.5 5.5 V8.5 H16.5 V12.5 H9.5 V15.5 Z" fill="#a8d4f4" stroke="#1a5aa8" stroke-width="1.2" stroke-linejoin="round"/></svg>
<svg class="a" style="left:736px;top:145px;" width="19" height="18" viewBox="0 0 19 18"><rect x="5.5" y="1.5" width="11" height="6" fill="#f5b050" stroke="#9a5a10"/><path d="M13.5 10.5 L8.5 5.5 V8.5 H1.5 V12.5 H8.5 V15.5 Z" fill="#a8d4f4" stroke="#1a5aa8" stroke-width="1.2" stroke-linejoin="round"/></svg>
<svg class="a" style="left:764px;top:145px;" width="19" height="18" viewBox="0 0 19 18"><rect x="1.5" y="1.5" width="11" height="6.5" fill="#f5b050" stroke="#9a5a10"/><rect x="5.5" y="9.5" width="11" height="6" fill="#b8b8b8" stroke="#444"/><path d="M1.5 9 L4.5 15 M13 2 L16 9" stroke="#666" stroke-width="0.8" stroke-dasharray="1 1"/></svg>
<svg class="a" style="left:792px;top:145px;" width="19" height="18" viewBox="0 0 19 18"><rect x="1.5" y="1.5" width="13" height="10" fill="none" stroke="#111" stroke-width="1.1" stroke-dasharray="1.1 1.1"/><path d="M10 8 L17 13.5 L13 14 L11 17 Z" fill="#4a6070" stroke="#2a3a48" stroke-width="0.6"/></svg>
<svg class="a" style="left:832px;top:145px;" width="19" height="17" viewBox="0 0 19 17"><path d="M7.5 1.5 H13.5 L16.5 4.5 L13.5 7.5 H7.5 Z" fill="#a8e2f2" stroke="#2a6a7a" stroke-width="1"/><path d="M6.5 3.5 L12 9.5 H9.5 V15.5 H4 V9.5 H1 Z" fill="#f8c890" stroke="#9a5a10" stroke-width="1" stroke-linejoin="round"/></svg>
<svg class="a" style="left:860px;top:145px;" width="19" height="17" viewBox="0 0 19 17"><path d="M7.5 9.5 H13.5 L16.5 12.5 L13.5 15.5 H7.5 Z" fill="#a8e2f2" stroke="#2a6a7a" stroke-width="1"/><path d="M4 1.5 H9 V7.5 H12 L6.5 13.5 L1 7.5 H4 Z" fill="#f8c890" stroke="#9a5a10" stroke-width="1" stroke-linejoin="round"/></svg>
<svg class="a" style="left:888px;top:145px;" width="19" height="17" viewBox="0 0 19 17"><path d="M1.5 1.5 H8 L11 4.5 L8 7.5 H1.5 Z" fill="#a8e2f2" stroke="#2a6a7a" stroke-width="1"/><path d="M7.5 9.5 H14 L17 12.5 L14 15.5 H7.5 Z" fill="#d0d0d0" stroke="#555" stroke-width="1"/><path d="M3.5 9 L5.5 14 M11.5 8 V9" stroke="#333" stroke-width="0.9" stroke-dasharray="1 1"/></svg>
<svg class="a" style="left:928px;top:145px;" width="18" height="17" viewBox="0 0 18 17"><path d="M0.8 5 L5 1 V3 H9.5 V7 H5 V9 Z" fill="#a8dcf4" stroke="#1a6aba" stroke-width="1"/><path d="M12 1.5 H16 M12 3.5 H16 M12 5.5 H16 M12 7.5 H16 M12 9.5 H16" stroke="#444" stroke-width="1" stroke-dasharray="1.5 0.5"/><path d="M2 11.5 H16 M2 13.5 H16 M2 15.5 H16" stroke="#333" stroke-width="1" stroke-dasharray="1.5 0.5"/></svg>
<svg class="a" style="left:956px;top:145px;" width="18" height="17" viewBox="0 0 18 17"><path d="M10 5 L5.8 1 V3 H1.3 V7 H5.8 V9 Z" fill="#a8dcf4" stroke="#1a6aba" stroke-width="1"/><path d="M12 1.5 H16 M12 3.5 H16 M12 5.5 H16 M12 7.5 H16 M12 9.5 H16" stroke="#444" stroke-width="1" stroke-dasharray="1.5 0.5"/><path d="M2 11.5 H16 M2 13.5 H16 M2 15.5 H16" stroke="#333" stroke-width="1" stroke-dasharray="1.5 0.5"/></svg>
<svg class="a" style="left:998px;top:147px;" width="14" height="14" viewBox="0 0 14 14"><defs><radialGradient id="rc" cx="0.4" cy="0.35" r="0.7"><stop offset="0" stop-color="#ffb0b0"/><stop offset="1" stop-color="#e84848"/></radialGradient></defs><circle cx="7" cy="7" r="6.2" fill="url(#rc)" stroke="#d04040" stroke-width="0.8"/></svg>
<svg class="a" style="left:1026px;top:147px;" width="14" height="14" viewBox="0 0 14 14"><rect x="1" y="1" width="12" height="12" fill="#c4c4c4" stroke="#6a6a6a" stroke-width="1.2"/><rect x="2" y="2" width="10" height="5" fill="#d4d4d4"/></svg>
<svg class="a" style="left:1064px;top:145px;" width="18" height="17" viewBox="0 0 18 17"><path d="M1.5 9 L4.5 2 L7 7.5 L10 1" stroke="#2a9a10" stroke-width="2.4" fill="none" stroke-linejoin="round"/><path d="M2 5.5 L4.5 2 L7 7.5 L9.5 3" stroke="#98e050" stroke-width="0.8" fill="none"/><path d="M12 5.5 H16 M12 7.5 H16 M12 9.5 H16" stroke="#444" stroke-width="1" stroke-dasharray="1.5 0.5"/><path d="M2 11.5 H16 M2 13.5 H16 M2 15.5 H16" stroke="#333" stroke-width="1" stroke-dasharray="1.5 0.5"/></svg>
<svg class="a" style="left:1093px;top:145px;" width="17" height="17" viewBox="0 0 17 17"><path d="M2 11.5 H16 M2 13.5 H16 M2 15.5 H16 M10 9.5 H16 M12 7.5 H16 M12 5.5 H16" stroke="#111" stroke-width="1" stroke-dasharray="1.5 0.5"/></svg>
<svg class="a" style="left:1120px;top:145px;" width="18" height="17" viewBox="0 0 18 17"><path d="M4.5 1.5 H10 L15.5 7 V15.5 H4.5 Z" fill="#e8eef4" stroke="#8a9aaa"/><path d="M6 4 L13 12" stroke="#8a9aaa"/><rect x="9" y="0" width="8" height="8" fill="#8a9098"/><path d="M11 1.5 V6.5 M11 4 Q13.5 2.5 14.5 4 V6.5" stroke="#fff" stroke-width="1.2" fill="none"/><rect x="0" y="9" width="8" height="8" fill="#d87a00"/><path d="M5.8 11 H2.5 V15 H5.8" stroke="#fff" stroke-width="1.3" fill="none"/></svg>
<svg class="a" style="left:1335px;top:148px;" width="10" height="10" viewBox="0 0 10 10"><rect x="0.5" y="0.5" width="9" height="9" fill="#eee" stroke="#555"/><path d="M5 1 V9 M1 5 H9" stroke="#111" stroke-width="1.6"/><path d="M3 3 L7 7 M7 3 L3 7" stroke="#333" stroke-width="0.8"/></svg>
<div class="a" style="left:411px;top:169px;width:914px;height:272px;background:#ffffff;"></div>
<div class="a" style="left:411px;top:169px;width:37px;height:272px;background:#e9e8e4;"></div>
<div class="a" style="left:448px;top:169px;width:1px;height:272px;background:#bcbcbc;"></div>
<div class="a" style="left:1201px;top:169px;width:1px;height:272px;background:#f2aaa4;"></div>
<div class="a" style="left:1325px;top:169px;width:13px;height:272px;background:#c1c3c3;"></div>
<div class="a" style="left:1328px;top:408px;width:7px;height:40px;background:#7b7f80;border-radius:3.5px"></div>
<div class="a" style="left:1338px;top:169px;width:13px;height:272px;background:#e8e8e7;"></div>
<div class="a" style="left:1341px;top:177px;width:7px;height:7px;background:#5db55d;"></div>
<div class="a" style="left:1340.5px;top:176.5px;width:8px;height:8px;background:rgba(0,0,0,0);border:1px solid #4a9a4a"></div>
<div class="t" style="left:429px;top:169.97px;font-size:14.5px;line-height:17px;color:#222222;font-weight:normal;font-family:'Liberation Sans',sans-serif;transform:scaleX(0.9913);transform-origin:0 0;">55</div>
<div class="t" style="left:429px;top:187.97px;font-size:14.5px;line-height:17px;color:#222222;font-weight:normal;font-family:'Liberation Sans',sans-serif;transform:scaleX(0.9913);transform-origin:0 0;">56</div>
<div class="t" style="left:429px;top:205.97px;font-size:14.5px;line-height:17px;color:#222222;font-weight:normal;font-family:'Liberation Sans',sans-serif;transform:scaleX(0.9913);transform-origin:0 0;">57</div>
<div class="t" style="left:429px;top:223.97px;font-size:14.5px;line-height:17px;color:#222222;font-weight:normal;font-family:'Liberation Sans',sans-serif;transform:scaleX(0.9913);transform-origin:0 0;">58</div>
<div class="t" style="left:429px;top:241.97px;font-size:14.5px;line-height:17px;color:#222222;font-weight:normal;font-family:'Liberation Sans',sans-serif;transform:scaleX(0.9913);transform-origin:0 0;">59</div>
<div class="t" style="left:429px;top:259.97px;font-size:14.5px;line-height:17px;color:#222222;font-weight:normal;font-family:'Liberation Sans',sans-serif;transform:scaleX(0.9913);transform-origin:0 0;">60</div>
<div class="t" style="left:429px;top:277.97px;font-size:14.5px;line-height:17px;color:#222222;font-weight:normal;font-family:'Liberation Sans',sans-serif;transform:scaleX(0.9913);transform-origin:0 0;">61</div>
<div class="t" style="left:429px;top:295.97px;font-size:14.5px;line-height:17px;color:#222222;font-weight:normal;font-family:'Liberation Sans',sans-serif;transform:scaleX(0.9913);transform-origin:0 0;">62</div>
<div class="t" style="left:429px;top:313.97px;font-size:14.5px;line-height:17px;color:#222222;font-weight:normal;font-family:'Liberation Sans',sans-serif;transform:scaleX(0.9913);transform-origin:0 0;">63</div>
<div class="t" style="left:429px;top:331.97px;font-size:14.5px;line-height:17px;color:#222222;font-weight:normal;font-family:'Liberation Sans',sans-serif;transform:scaleX(0.9913);transform-origin:0 0;">64</div>
<div class="t" style="left:429px;top:349.97px;font-size:14.5px;line-height:17px;color:#222222;font-weight:normal;font-family:'Liberation Sans',sans-serif;transform:scaleX(0.9913);transform-origin:0 0;">65</div>
<div class="t" style="left:429px;top:367.97px;font-size:14.5px;line-height:17px;color:#222222;font-weight:normal;font-family:'Liberation Sans',sans-serif;transform:scaleX(0.9913);transform-origin:0 0;">66</div>
<div class="t" style="left:429px;top:385.97px;font-size:14.5px;line-height:17px;color:#222222;font-weight:normal;font-family:'Liberation Sans',sans-serif;transform:scaleX(0.9913);transform-origin:0 0;">67</div>
<div class="t" style="left:429px;top:403.97px;font-size:14.5px;line-height:17px;color:#222222;font-weight:normal;font-family:'Liberation Sans',sans-serif;transform:scaleX(0.9913);transform-origin:0 0;">68</div>
<div class="t" style="left:429px;top:421.97px;font-size:14.5px;line-height:17px;color:#222222;font-weight:normal;font-family:'Liberation Sans',sans-serif;transform:scaleX(0.9913);transform-origin:0 0;">69</div>
<div class="a" style="left:463px;top:169px;width:1px;height:20px;background:#6b6b6b;"></div>
<div class="a" style="left:458px;top:191px;width:11px;height:11px;border:1px solid #6b6b6b;background:#fff"></div>
<div class="a" style="left:461px;top:196px;width:5px;height:1px;background:#333;"></div>
<div class="a" style="left:463px;top:202px;width:1px;height:120px;background:#6b6b6b;"></div>
<div class="a" style="left:463px;top:250px;width:5px;height:1px;background:#6b6b6b;"></div>
<div class="a" style="left:463px;top:322px;width:6px;height:1px;background:#6b6b6b;"></div>
<div class="a" style="left:458px;top:371px;width:11px;height:11px;border:1px solid #6b6b6b;background:#fff"></div>
<div class="a" style="left:461px;top:376px;width:5px;height:1px;background:#333;"></div>
<div class="a" style="left:463px;top:382px;width:1px;height:25px;background:#6b6b6b;"></div>
<div class="a" style="left:458px;top:407px;width:11px;height:11px;border:1px solid #6b6b6b;background:#fff"></div>
<div class="a" style="left:461px;top:412px;width:5px;height:1px;background:#333;"></div>
<div class="a" style="left:463px;top:418px;width:1px;height:23px;background:#6b6b6b;"></div>
<div class="a" style="left:481px;top:169px;width:1px;height:161px;background:repeating-linear-gradient(#c4c4c4 0 1px,transparent 1px 2px)"></div>
<div class="a" style="left:517px;top:187px;width:1px;height:71px;background:repeating-linear-gradient(#c4c4c4 0 1px,transparent 1px 2px)"></div>
<div class="a" style="left:517px;top:276px;width:1px;height:36px;background:repeating-linear-gradient(#c4c4c4 0 1px,transparent 1px 2px)"></div>
<div class="a" style="left:553px;top:205px;width:1px;height:35px;background:repeating-linear-gradient(#c4c4c4 0 1px,transparent 1px 2px)"></div>
<div class="a" style="left:481px;top:385px;width:1px;height:56px;background:repeating-linear-gradient(#c4c4c4 0 1px,transparent 1px 2px)"></div>
<div class="a" style="left:517px;top:385px;width:1px;height:56px;background:repeating-linear-gradient(#c4c4c4 0 1px,transparent 1px 2px)"></div>
<div class="t" style="left:517px;top:170.51px;font-size:15px;line-height:18px;color:#0000e6;font-weight:normal;font-family:'Liberation Mono',monospace;transform:scaleX(0.9991);transform-origin:0 0;">if</div>
<div class="t" style="left:535px;top:170.51px;font-size:15px;line-height:18px;color:#000000;font-weight:normal;font-family:'Liberation Mono',monospace;transform:scaleX(0.9998);transform-origin:0 0;"> (!(DiaCorrecto &amp;&amp; MesCorrecto &amp;&amp; AnyoCorrecto))</div>
<div class="t" style="left:481px;top:188.51px;font-size:15px;line-height:18px;color:#000000;font-weight:normal;font-family:'Liberation Mono',monospace;transform:scaleX(0.9998);transform-origin:0 0;">       {</div>
<div class="t" style="left:481px;top:206.51px;font-size:15px;line-height:18px;color:#000000;font-weight:normal;font-family:'Liberation Mono',monospace;transform:scaleX(0.9998);transform-origin:0 0;">         std::cout </div>
<div class="t" style="left:652px;top:206.51px;font-size:15px;line-height:18px;color:#000000;font-weight:normal;font-family:'Liberation Mono',monospace;transform:scaleX(0.9994);transform-origin:0 0;">&lt;&lt; </div>
<div class="t" style="left:679px;top:206.51px;font-size:15px;line-height:18px;color:#ce7b00;font-weight:normal;font-family:'Liberation Mono',monospace;transform:scaleX(0.9983);transform-origin:0 0;">&quot;</div>
<div class="t" style="left:688px;top:206.51px;font-size:15px;line-height:18px;color:#ce7b00;font-weight:bold;font-family:'Liberation Mono',monospace;transform:scaleX(0.9991);transform-origin:0 0;">\n</div>
<div class="t" style="left:706px;top:206.51px;font-size:15px;line-height:18px;color:#ce7b00;font-weight:normal;font-family:'Liberation Mono',monospace;transform:scaleX(0.9998);transform-origin:0 0;"> Datos no validos </div>
<div class="t" style="left:868px;top:206.51px;font-size:15px;line-height:18px;color:#ce7b00;font-weight:bold;font-family:'Liberation Mono',monospace;transform:scaleX(0.9996);transform-origin:0 0;">\n\n</div>
<div class="t" style="left:904px;top:206.51px;font-size:15px;line-height:18px;color:#ce7b00;font-weight:normal;font-family:'Liberation Mono',monospace;transform:scaleX(0.9983);transform-origin:0 0;">&quot;</div>
<div class="t" style="left:913px;top:206.51px;font-size:15px;line-height:18px;color:#000000;font-weight:normal;font-family:'Liberation Mono',monospace;transform:scaleX(0.9983);transform-origin:0 0;">;</div>
<div class="t" style="left:562px;top:224.51px;font-size:15px;line-height:18px;color:#0000e6;font-weight:normal;font-family:'Liberation Mono',monospace;transform:scaleX(0.9997);transform-origin:0 0;">return</div>
<div class="t" style="left:616px;top:224.51px;font-size:15px;line-height:18px;color:#000000;font-weight:normal;font-family:'Liberation Mono',monospace;transform:scaleX(0.9996);transform-origin:0 0;"> 0; </div>
<div class="t" style="left:652px;top:224.51px;font-size:15px;line-height:18px;color:#969696;font-weight:normal;font-family:'Liberation Mono',monospace;transform:scaleX(0.9998);transform-origin:0 0;">// fecha incorrecta, booleano que regresa valor 0</div>
<div class="t" style="left:481px;top:242.51px;font-size:15px;line-height:18px;color:#000000;font-weight:normal;font-family:'Liberation Mono',monospace;transform:scaleX(0.9998);transform-origin:0 0;">       }</div>
<div class="t" style="left:517px;top:260.51px;font-size:15px;line-height:18px;color:#0000e6;font-weight:normal;font-family:'Liberation Mono',monospace;transform:scaleX(0.9996);transform-origin:0 0;">else</div>
<div class="t" style="left:553px;top:296.51px;font-size:15px;line-height:18px;color:#0000e6;font-weight:normal;font-family:'Liberation Mono',monospace;transform:scaleX(0.9997);transform-origin:0 0;">return</div>
<div class="t" style="left:607px;top:296.51px;font-size:15px;line-height:18px;color:#000000;font-weight:normal;font-family:'Liberation Mono',monospace;transform:scaleX(0.9996);transform-origin:0 0;"> 1; </div>
<div class="t" style="left:643px;top:296.51px;font-size:15px;line-height:18px;color:#969696;font-weight:normal;font-family:'Liberation Mono',monospace;transform:scaleX(0.9998);transform-origin:0 0;">//fecha correcta, booleano que regresa valor 1</div>
<div class="t" style="left:481px;top:314.51px;font-size:15px;line-height:18px;color:#000000;font-weight:normal;font-family:'Liberation Mono',monospace;transform:scaleX(0.9991);transform-origin:0 0;"> }</div>
<div class="t" style="left:481px;top:332.51px;font-size:15px;line-height:18px;color:#969696;font-weight:normal;font-family:'Liberation Mono',monospace;transform:scaleX(0.9998);transform-origin:0 0;">// Funcion Verifica si el año es bisiesto</div>
<div class="t" style="left:481px;top:350.51px;font-size:15px;line-height:18px;color:#0000e6;font-weight:normal;font-family:'Liberation Mono',monospace;transform:scaleX(0.9994);transform-origin:0 0;">int</div>
<div class="t" style="left:517px;top:350.51px;font-size:15px;line-height:18px;color:#000000;font-weight:bold;font-family:'Liberation Mono',monospace;transform:scaleX(0.9998);transform-origin:0 0;">Bisiesto</div>
<div class="t" style="left:589px;top:350.51px;font-size:15px;line-height:18px;color:#000000;font-weight:normal;font-family:'Liberation Mono',monospace;transform:scaleX(0.9983);transform-origin:0 0;">(</div>
<div class="t" style="left:598px;top:350.51px;font-size:15px;line-height:18px;color:#0000e6;font-weight:normal;font-family:'Liberation Mono',monospace;transform:scaleX(0.9994);transform-origin:0 0;">int</div>
<div class="a" style="left:634px;top:349px;width:36px;height:18px;background:#e8e8a6;"></div>
<div class="t" style="left:634px;top:350.51px;font-size:15px;line-height:18px;color:#000000;font-weight:normal;font-family:'Liberation Mono',monospace;transform:scaleX(0.9996);transform-origin:0 0;">anyo</div>
<div class="t" style="left:670px;top:350.51px;font-size:15px;line-height:18px;color:#000000;font-weight:normal;font-family:'Liberation Mono',monospace;transform:scaleX(0.9983);transform-origin:0 0;">)</div>
<div class="t" style="left:481px;top:368.51px;font-size:15px;line-height:18px;color:#000000;font-weight:normal;font-family:'Liberation Mono',monospace;transform:scaleX(0.9983);transform-origin:0 0;">{</div>
<div class="t" style="left:526px;top:386.51px;font-size:15px;line-height:18px;color:#0000e6;font-weight:normal;font-family:'Liberation Mono',monospace;transform:scaleX(0.9991);transform-origin:0 0;">if</div>
<div class="t" style="left:544px;top:386.51px;font-size:15px;line-height:18px;color:#000000;font-weight:normal;font-family:'Liberation Mono',monospace;transform:scaleX(0.9994);transform-origin:0 0;"> ((</div>
<div class="a" style="left:571px;top:385px;width:36px;height:18px;background:#e8e8a6;"></div>
<div class="t" style="left:571px;top:386.51px;font-size:15px;line-height:18px;color:#000000;font-weight:normal;font-family:'Liberation Mono',monospace;transform:scaleX(0.9996);transform-origin:0 0;">anyo</div>
<div class="t" style="left:607px;top:386.51px;font-size:15px;line-height:18px;color:#000000;font-weight:normal;font-family:'Liberation Mono',monospace;transform:scaleX(0.9998);transform-origin:0 0;">%4 ==0 &amp;&amp; </div>
<div class="a" style="left:697px;top:385px;width:36px;height:18px;background:#e8e8a6;"></div>
<div class="t" style="left:697px;top:386.51px;font-size:15px;line-height:18px;color:#000000;font-weight:normal;font-family:'Liberation Mono',monospace;transform:scaleX(0.9996);transform-origin:0 0;">anyo</div>
<div class="t" style="left:733px;top:386.51px;font-size:15px;line-height:18px;color:#000000;font-weight:normal;font-family:'Liberation Mono',monospace;transform:scaleX(0.9997);transform-origin:0 0;">%100 !=0)|| </div>
<div class="a" style="left:841px;top:385px;width:36px;height:18px;background:#e8e8a6;"></div>
<div class="t" style="left:841px;top:386.51px;font-size:15px;line-height:18px;color:#000000;font-weight:normal;font-family:'Liberation Mono',monospace;transform:scaleX(0.9996);transform-origin:0 0;">anyo</div>
<div class="t" style="left:877px;top:386.51px;font-size:15px;line-height:18px;color:#000000;font-weight:normal;font-family:'Liberation Mono',monospace;transform:scaleX(0.9998);transform-origin:0 0;">%400 ==0)</div>
<div class="t" style="left:481px;top:404.51px;font-size:15px;line-height:18px;color:#000000;font-weight:normal;font-family:'Liberation Mono',monospace;transform:scaleX(0.9998);transform-origin:0 0;">       { </div>
<div class="t" style="left:562px;top:404.51px;font-size:15px;line-height:18px;color:#0000e6;font-weight:normal;font-family:'Liberation Mono',monospace;transform:scaleX(0.9997);transform-origin:0 0;">return</div>
<div class="t" style="left:616px;top:404.51px;font-size:15px;line-height:18px;color:#000000;font-weight:normal;font-family:'Liberation Mono',monospace;transform:scaleX(0.9996);transform-origin:0 0;"> 1;}</div>
<div class="t" style="left:526px;top:422.51px;font-size:15px;line-height:18px;color:#0000e6;font-weight:normal;font-family:'Liberation Mono',monospace;transform:scaleX(0.9996);transform-origin:0 0;">else</div>
<div class="a" style="left:0px;top:442px;width:1351px;height:30px;background:#f2f2f2;border:1px solid #b9b9b9;border-bottom:none;border-radius:4px 4px 0 0"></div>
<div class="a" style="left:0px;top:442px;width:1px;height:217px;background:#b9b9b9;"></div>
<div class="t" style="left:7px;top:446.25px;font-size:16px;line-height:19px;color:#2e3436;font-weight:normal;font-family:'Liberation Sans',sans-serif;transform:scaleX(0.9369);transform-origin:0 0;">Output</div>
<svg class="a" style="left:1317px;top:453px;" width="9" height="8" viewBox="0 0 9 8"><path d="M1 0.5 L8 7.5 M8 0.5 L1 7.5" stroke="#2e3436" stroke-width="1.5"/></svg>
<svg class="a" style="left:1335px;top:454px;" width="8" height="7" viewBox="0 0 8 7"><circle cx="3.5" cy="3.5" r="3.2" fill="#2e3436"/></svg>
<div class="a" style="left:7px;top:477px;width:14px;height:14px;background:#d2b0b0;border:1px solid #b89090"></div>
<div class="a" style="left:11px;top:481px;width:5px;height:5px;background:#d8d4d4;"></div>
<svg class="a" style="left:6px;top:502px;" width="15" height="15" viewBox="0 0 15 15"><path d="M1 1 L7.5 7.5 L1 14 Z M7 1 L13.5 7.5 L7 14 Z" fill="#8fe27a" stroke="#2a9a1e" stroke-width="1.6"/></svg>
<svg class="a" style="left:6px;top:528px;" width="15" height="15" viewBox="0 0 15 15"><path d="M1 1 L7.5 7.5 L1 14 Z M7 1 L13.5 7.5 L7 14 Z" fill="#e2e27a" stroke="#9a9a2a" stroke-width="1.6"/></svg>
<svg class="a" style="left:6px;top:554px;" width="16" height="16" viewBox="0 0 16 16"><defs><linearGradient id="tg" x1="0" y1="0" x2="0" y2="1"><stop offset="0" stop-color="#7aa84a"/><stop offset="0.5" stop-color="#2a3a20"/><stop offset="1" stop-color="#000"/></linearGradient></defs><rect x="0.5" y="0.5" width="15" height="15" rx="2.5" fill="#e0e0e0" stroke="#505050"/><rect x="2.5" y="2.5" width="11" height="11" fill="url(#tg)" stroke="#111" stroke-width="0.8"/><path d="M4.5 5 L6.5 6.5 L4.5 8" stroke="#fff" stroke-width="1" fill="none"/><rect x="7" y="10" width="4.5" height="1.5" fill="#fff"/></svg>
<svg class="a" style="left:6px;top:580px;" width="16" height="15" viewBox="0 0 16 15"><rect x="0.5" y="0.5" width="13" height="14" fill="#d4d4d4" stroke="#b0b0b0"/><path d="M5.5 0.5 V14.5" stroke="#b8b8b8"/><rect x="2" y="2" width="2.5" height="2.5" fill="none" stroke="#a0a0a0" stroke-width="0.8"/><rect x="2" y="6" width="2.5" height="2.5" fill="#d89898"/><rect x="2" y="10" width="2.5" height="2.5" fill="none" stroke="#a0a0a0" stroke-width="0.8"/><rect x="7.5" y="5" width="2" height="3" fill="#e0a8a8"/><path d="M10.5 14 V5 C10.5 2.5 14.5 2.5 14.5 5 V13 C14.5 14.8 12.5 14.8 12.5 13 V6" fill="none" stroke="#a8a8a8" stroke-width="1.3"/></svg>
<div class="a" style="left:32px;top:473px;width:196px;height:33px;background:#ececec;border:1px solid #c0c0c0;border-bottom:none;border-radius:4px 4px 0 0"></div>
<div class="a" style="left:228px;top:473px;width:152px;height:33px;background:#f8f8f8;border:1px solid #c0c0c0;border-bottom:none;border-radius:4px 4px 0 0"></div>
<div class="t" style="left:40.2px;top:482.25px;font-size:16px;line-height:19px;color:#2e3436;font-weight:normal;font-family:'Liberation Sans',sans-serif;transform:scaleX(0.8928);transform-origin:0 0;">estructura_6 (Build, Run)</div>
<svg class="a" style="left:208px;top:488px;" width="8" height="8" viewBox="0 0 8 8"><path d="M0.8 0.8 L7.2 7.2 M7.2 0.8 L0.8 7.2" stroke="#2e3436" stroke-width="1.5"/></svg>
<div class="t" style="left:236.3px;top:482.25px;font-size:16px;line-height:19px;color:#2e3436;font-weight:normal;font-family:'Liberation Sans',sans-serif;transform:scaleX(0.8899);transform-origin:0 0;">estructura_6 (Run)</div>
<svg class="a" style="left:361px;top:488px;" width="8" height="8" viewBox="0 0 8 8"><path d="M0.8 0.8 L7.2 7.2 M7.2 0.8 L0.8 7.2" stroke="#2e3436" stroke-width="1.5"/></svg>
<div class="a" style="left:32px;top:505px;width:1314px;height:1px;background:#b9b9b9;"></div>
<div class="a" style="left:32px;top:505px;width:1px;height:154px;background:#b9b9b9;"></div>
<div class="a" style="left:1345px;top:505px;width:1px;height:154px;background:#b9b9b9;"></div>
<div class="a" style="left:1341px;top:506px;width:4px;height:153px;background:#ffffff;"></div>
<div class="a" style="left:33px;top:506px;width:4px;height:153px;background:#ffffff;"></div>
<div class="a" style="left:33px;top:506px;width:1295px;height:1px;background:#ffffff;"></div>
<div class="a" style="left:1328px;top:506px;width:13px;height:153px;background:#c6c7c7;"></div>
<div class="a" style="left:1332px;top:510px;width:6px;height:146px;background:#7a7f80;border-radius:3px"></div>
<div class="t" style="left:37px;top:508.51px;font-size:15px;line-height:18px;color:#000000;font-weight:normal;font-family:'Liberation Mono',monospace;transform:scaleX(0.9998);transform-origin:0 0;">Dia, ##    :26</div>
<div class="t" style="left:37px;top:526.51px;font-size:15px;line-height:18px;color:#000000;font-weight:normal;font-family:'Liberation Mono',monospace;transform:scaleX(0.9997);transform-origin:0 0;">Mes, ##    :5</div>
<div class="t" style="left:37px;top:544.51px;font-size:15px;line-height:18px;color:#000000;font-weight:normal;font-family:'Liberation Mono',monospace;transform:scaleX(0.9998);transform-origin:0 0;">Año, ####  :2021</div>
<div class="t" style="left:37px;top:562.51px;font-size:15px;line-height:18px;color:#000000;font-weight:normal;font-family:'Liberation Mono',monospace;transform:scaleX(0.9998);transform-origin:0 0;">26/5/2021</div>
<div class="t" style="left:37px;top:598.51px;font-size:15px;line-height:18px;color:#008a00;font-weight:normal;font-family:'Liberation Mono',monospace;transform:scaleX(0.9998);transform-origin:0 0;">RUN FINISHED; exit value 0; real time: 16s; user: 0ms; system: 0ms</div>
<div class="a" style="left:37px;top:615px;width:9px;height:18px;background:#000000;"></div>
</body></html>
